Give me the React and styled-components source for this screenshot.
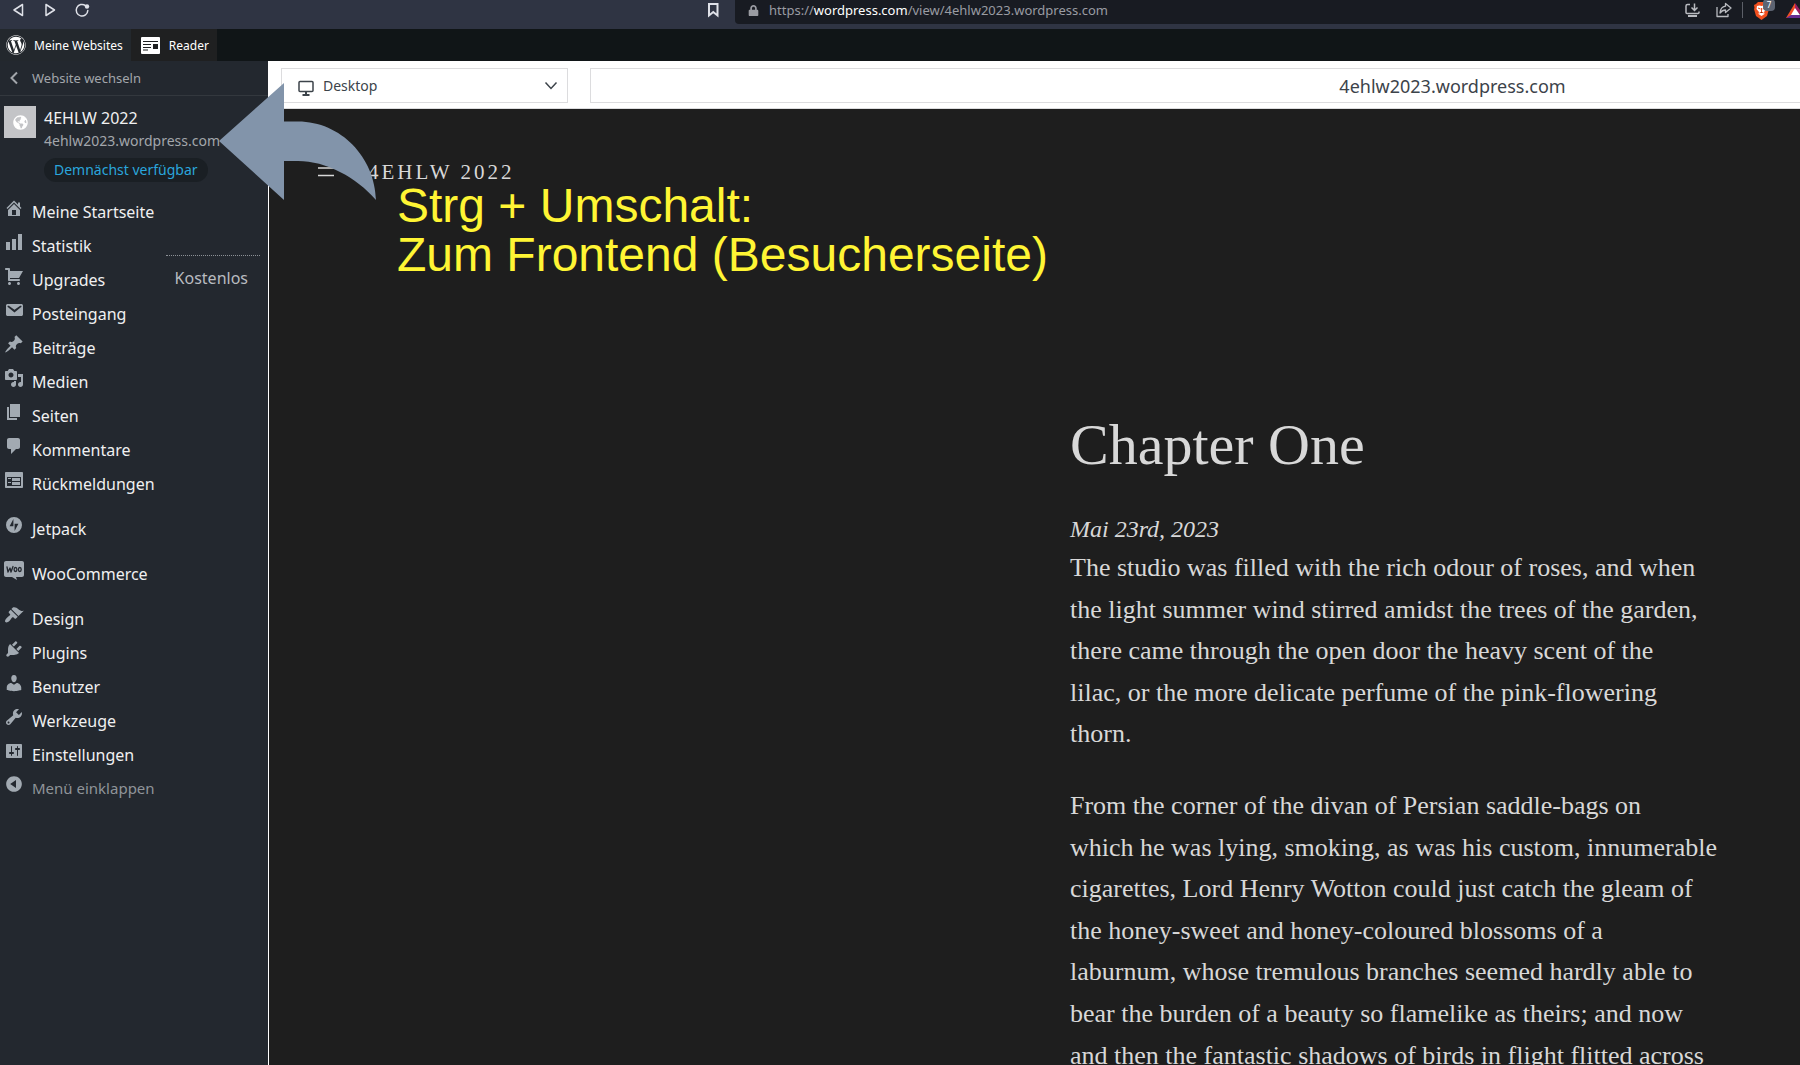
import React, { useState } from 'react';
import styled, { createGlobalStyle } from 'styled-components'
import { FaWordpress, FaGlobeAmericas, FaLock } from 'react-icons/fa'

const GlobalStyle = createGlobalStyle`
  * { box-sizing: border-box; }
  body {
    margin: 0;
    background: #1e1e1e;
    font-family: "Noto Sans", "Open Sans", sans-serif;
  }
  button, input, select {
    font-family: inherit;
    border: 0;
    padding: 0;
    margin: 0;
    background: none;
    color: inherit;
  }
  a { color: inherit; text-decoration: none; }
`

const icons = {
  home: 'M16 8.5l1.53 1.53-1.06 1.06L10 4.6l-6.47 6.49-1.06-1.06L10 2.5l4 4v-2h2v4zm-6-2.46l6 5.99V18H4v-5.97zM12 17v-5H8v5h4z',
  stats: 'M18 18V2h-4v16h4zm-6 0V7H8v11h4zm-6 0v-8H2v8h4z',
  cart: 'M6 13h9c.55 0 1 .45 1 1s-.45 1-1 1H5c-.55 0-1-.45-1-1V4H2c-.55 0-1-.45-1-1s.45-1 1-1h3c.55 0 1 .45 1 1v2h13l-4 7H6v1zm-.5 3c.83 0 1.5.67 1.5 1.5S6.33 19 5.5 19 4 18.33 4 17.5 4.67 16 5.5 16zm9 0c.83 0 1.5.67 1.5 1.5s-.67 1.5-1.5 1.5-1.5-.67-1.5-1.5.67-1.5 1.5-1.5z',
  mail: 'M3.87 4h13.25C18.37 4 19 4.59 19 5.79v8.42c0 1.19-.63 1.79-1.88 1.79H3.87c-1.25 0-1.88-.6-1.88-1.79V5.79c0-1.2.63-1.79 1.88-1.79zm6.62 8.6l6.74-5.53c.24-.2.43-.66.13-1.07-.29-.41-.82-.42-1.17-.17l-5.7 3.86L4.8 5.83c-.35-.25-.88-.24-1.17.17-.3.41-.11.87.13 1.07z',
  post: 'M10.44 3.02l1.82-1.82 6.36 6.35-1.83 1.82c-1.05-.68-2.48-.57-3.41.36l-.75.75c-.92.93-1.04 2.35-.35 3.41l-1.83 1.82-2.41-2.41-2.8 2.79c-.42.42-3.38 2.71-3.8 2.29s1.86-3.39 2.28-3.81l2.79-2.79L4.1 9.36l1.83-1.82c1.05.69 2.48.57 3.4-.36l.75-.75c.93-.92 1.05-2.35.36-3.41z',
  media: 'M13 11V4c0-.55-.45-1-1-1h-1.67L9 1H5L3.67 3H2c-.55 0-1 .45-1 1v7c0 .55.45 1 1 1h10c.55 0 1-.45 1-1zM7 4.5c1.38 0 2.5 1.12 2.5 2.5S8.38 9.5 7 9.5 4.5 8.38 4.5 7 5.62 4.5 7 4.5zM14 6h5v10.5c0 1.38-1.12 2.5-2.5 2.5S14 17.88 14 16.5s1.12-2.5 2.5-2.5c.17 0 .34.02.5.05V9h-3V6zm-4 8.05V13h2v3.5c0 1.38-1.12 2.5-2.5 2.5S7 17.88 7 16.5 8.12 14 9.5 14c.17 0 .34.02.5.05z',
  page: 'M6 15V2h10v13H6zm-1 1h8v2H3V5h2v11z',
  comment: 'M5 2h9c1.1 0 2 .9 2 2v7c0 1.1-.9 2-2 2h-2l-5 5v-5H5c-1.1 0-2-.9-2-2V4c0-1.1.9-2 2-2z',
  feedback: 'M2 2h16c.55 0 1 .45 1 1v14c0 .55-.45 1-1 1H2c-.55 0-1-.45-1-1V3c0-.55.45-1 1-1zm15 14V7H3v9h14zM4 8v1h3V8H4zm4 0v3h8V8H8zm-4 4v1h3v-1H4zm4 0v3h8v-3H8z',
  jetpack: 'M10 2a8 8 0 1 0 0 16 8 8 0 0 0 0-16zM9.4 11.2H5.6L9.4 4zM10.6 16V8.8h3.8z',
  design: 'M14.48 11.06L7.41 3.99l1.5-1.5c.5-.56 2.3-.47 3.51.32 1.21.8 1.43 1.28 2.91 2.1 1.18.64 2.45 1.26 4.45.85zm-.71.71L6.7 4.7 4.93 6.47c-.39.39-.39 1.02 0 1.41l1.06 1.06c.39.39.39 1.03 0 1.42-.6.6-1.43 1.11-2.21 1.69-.35.26-.7.53-1.01.84C1.43 14.23.4 16.08 1.4 17.07c.99 1 2.84-.03 4.18-1.36.31-.31.58-.66.85-1.02.57-.78 1.08-1.61 1.69-2.21.39-.39 1.02-.39 1.41 0l1.06 1.06c.39.39 1.02.39 1.41 0z',
  plugins: 'M13.11 4.36L9.87 7.6 8 5.73l3.24-3.24c.35-.34 1.05-.2 1.56.32.52.51.66 1.21.31 1.55zm-8 1.77l.91-1.12 9.01 9.01-1.19.84c-.71.71-2.63 1.16-3.82 1.16H6.14L4.9 17.26c-.59.59-1.54.59-2.12 0-.59-.58-.59-1.53 0-2.12l1.24-1.24v-3.88c0-1.13.4-3.19 1.09-3.89zm7.26 3.97l3.24-3.24c.34-.35 1.04-.21 1.55.31.52.51.66 1.21.31 1.55l-3.24 3.25z',
  users: 'M10 9.25c-2.27 0-2.73-3.44-2.73-3.44C7 4.02 7.82 2 9.97 2c2.16 0 2.98 2.02 2.71 3.81 0 0-.41 3.44-2.68 3.44zm0 2.57L12.72 10c2.39 0 4.52 2.33 4.52 4.53v2.49s-3.65 1.13-7.24 1.13c-3.65 0-7.24-1.13-7.24-1.13v-2.49c0-2.25 1.94-4.48 4.47-4.48z',
  tools: 'M16.68 9.77c-1.34 1.34-3.3 1.67-4.95.99l-5.41 6.52c-.99.99-2.59.99-3.58 0s-.99-2.59 0-3.57l6.52-5.42c-.68-1.65-.35-3.61.99-4.95 1.28-1.28 3.12-1.62 4.72-1.06l-2.89 2.89 2.82 2.82 2.86-2.87c.53 1.58.18 3.39-1.08 4.65zM3.81 16.21c.4.39 1.04.39 1.43 0 .4-.4.4-1.04 0-1.43-.39-.4-1.03-.4-1.43 0-.39.39-.39 1.03 0 1.43z',
  settings: 'M18 16V4c0-.55-.45-1-1-1H3c-.55 0-1 .45-1 1v12c0 .55.45 1 1 1h14c.55 0 1-.45 1-1zM8 11h1c.55 0 1 .45 1 1s-.45 1-1 1H8v1.5c0 .28-.22.5-.5.5s-.5-.22-.5-.5V13H6c-.55 0-1-.45-1-1s.45-1 1-1h1V5.5c0-.28.22-.5.5-.5s.5.22.5.5V11zm5-2h-1c-.55 0-1-.45-1-1s.45-1 1-1h1V5.5c0-.28.22-.5.5-.5s.5.22.5.5V7h1c.55 0 1 .45 1 1s-.45 1-1 1h-1v5.5c0 .28-.22.5-.5.5s-.5-.22-.5-.5V9z',
  collapse: 'M10 2.16c4.33 0 7.84 3.51 7.84 7.84s-3.51 7.84-7.84 7.84S2.16 14.33 2.16 10 5.71 2.16 10 2.16zm2 11.72V6.12L6.18 9.97z'
}

const menu = [
  [
    ['home', 'Meine Startseite'],
    ['stats', 'Statistik'],
    ['cart', 'Upgrades', 'Kostenlos'],
    ['mail', 'Posteingang'],
    ['post', 'Beiträge'],
    ['media', 'Medien'],
    ['page', 'Seiten'],
    ['comment', 'Kommentare'],
    ['feedback', 'Rückmeldungen']
  ],
  [['jetpack', 'Jetpack']],
  [['woo', 'WooCommerce']],
  [
    ['design', 'Design'],
    ['plugins', 'Plugins'],
    ['users', 'Benutzer'],
    ['tools', 'Werkzeuge'],
    ['settings', 'Einstellungen']
  ]
]

const paragraphs = [
  [
    'The studio was filled with the rich odour of roses, and when',
    'the light summer wind stirred amidst the trees of the garden,',
    'there came through the open door the heavy scent of the',
    'lilac, or the more delicate perfume of the pink-flowering',
    'thorn.'
  ],
  [
    'From the corner of the divan of Persian saddle-bags on',
    'which he was lying, smoking, as was his custom, innumerable',
    'cigarettes, Lord Henry Wotton could just catch the gleam of',
    'the honey-sweet and honey-coloured blossoms of a',
    'laburnum, whose tremulous branches seemed hardly able to',
    'bear the burden of a beauty so flamelike as theirs; and now',
    'and then the fantastic shadows of birds in flight flitted across'
  ]
]

const Screen = styled.div`
  position: relative;
  display: flex;
  flex-direction: column;
  height: 100vh;
  overflow: hidden;
`

const BrowserBar = styled.header`
  display: flex;
  align-items: flex-start;
  height: 29px;
  flex: none;
  background: #2f3443;
  color: #dfe1e8;
`

const NavButtons = styled.div`
  display: flex;
  gap: 16px;
  padding: 2px 10px;
  flex: 1;
`

const IconButton = styled.button`
  display: flex;
  width: 16px;
  height: 16px;
`

const Location = styled.div`
  display: flex;
  align-items: center;
  flex: 0 0 1065px;
  height: 24px;
  padding: 0 0 4px 13px;
  margin-left: 13px;
  background: #181b22;
  border-bottom-left-radius: 4px;
  overflow: hidden;
  color: #9a9ca2;
  font-size: 13px;
  line-height: 20px;
`

const Url = styled.div`
  flex: 1;
  padding-left: 10px;

  b {
    font-weight: 400;
    color: #fff;
  }
`

const Actions = styled.div`
  display: flex;
  align-items: center;
  gap: 16px;
`

const Divider = styled.span`
  width: 1px;
  height: 16px;
  margin: 0 -6px;
  background: #5c5f68;
`

const Shield = styled.button`
  position: relative;
  display: flex;
`

const ShieldCount = styled.span`
  position: absolute;
  top: -2px;
  left: 10px;
  width: 12px;
  height: 12px;
  border-radius: 4px;
  background: #5d6472;
  color: #fff;
  font-size: 8px;
  line-height: 12px;
  text-align: center;
`

const MasterBar = styled.nav`
  display: flex;
  height: 32px;
  flex: none;
  background: #101517;
  color: #fff;
  font-size: 12px;
`

const MasterItem = styled.a`
  display: flex;
  align-items: center;
  gap: 8px;
  padding: 0 8px 0 6px;
  background: #23282d;
`

const ReaderItem = styled(MasterItem)`
  gap: 9px;
  padding: 0 8px 0 10px;
  background: #1f2021;
`

const Body = styled.div`
  display: flex;
  flex: 1;
  min-height: 0;
`

const Sidebar = styled.aside`
  width: 268px;
  flex: none;
  background: #23282f;
  color: #f0f0f1;
`

const SwitchSite = styled.a`
  display: flex;
  align-items: center;
  gap: 10px;
  height: 35px;
  padding-left: 8px;
  border-bottom: 1px solid #33383e;
  color: #a2a6ab;
  font-size: 13px;
`

const Site = styled.div`
  display: flex;
  align-items: flex-start;
  gap: 8px;
  padding: 10px 4px 13px;
`

const SiteIcon = styled.div`
  display: flex;
  align-items: center;
  justify-content: center;
  width: 32px;
  height: 32px;
  background: #c3c4c7;
  color: #fff;
`

const SiteName = styled.div`
  font-size: 16px;
  line-height: 24px;
`

const SiteUrl = styled.div`
  color: #a2a6ab;
  font-size: 14px;
  line-height: 22px;
`

const SiteBadge = styled.div`
  width: fit-content;
  margin-top: 6px;
  padding: 0 10px;
  border-radius: 12px;
  background: #1a1f24;
  color: #2aa6dc;
  font-size: 14px;
  line-height: 24px;
`

const MenuGroup = styled.ul`
  list-style: none;
  margin: 0 0 11px;
  padding: 0;
`

const MenuItem = styled.a`
  position: relative;
  display: flex;
  align-items: flex-start;
  gap: 8px;
  height: 34px;
  padding: 3px 4px;
  font-size: 16px;
  line-height: 28px;

  svg {
    flex: none;
    fill: #a2aab2;
  }
`

const Collapse = styled(MenuItem)`
  margin-top: -12px;
  width: 100%;
  color: #8f9499;
  font-size: 15px;
  text-align: left;
`

const Plan = styled.span`
  position: absolute;
  top: -8px;
  right: 8px;
  padding: 0 12px 0 9px;
  border-top: 1px dotted #8c9196;
  color: #b9bcc0;
  line-height: 44px;
`

const Preview = styled.main`
  flex: 1;
  min-width: 0;
  border-left: 1px solid #fff;
  overflow: hidden;
`

const Toolbar = styled.div`
  display: flex;
  gap: 22px;
  height: 48px;
  padding: 7px 0 6px 12px;
  background: #fff;
  color: #3c434a;
  border-bottom: 1px solid #dcdcde;
`

const DeviceField = styled.label`
  position: relative;
  width: 287px;
  flex: none;

  svg {
    position: absolute;
    pointer-events: none;
  }
  svg:first-child { left: 17px; top: 12px; }
  svg:last-child { right: 10px; top: 13px; }
`

const DeviceSelect = styled.select`
  appearance: none;
  width: 100%;
  height: 35px;
  padding-left: 41px;
  border: 1px solid #dcdcde;
  font-size: 14px;
`

const Address = styled.input`
  flex: 1;
  min-width: 0;
  height: 35px;
  padding-left: 514px;
  border: 1px solid #dcdcde;
  border-right: 0;
  font-size: 18px;
  text-align: center;
`

const BlogHeader = styled.div`
  display: flex;
  align-items: center;
  gap: 34px;
  padding: 50px 49px 0;
  color: #d8d8d8;
  font-family: "Liberation Serif", serif;
  font-size: 21px;
  line-height: 26px;
  letter-spacing: 3px;
`

const Article = styled.article`
  width: 648px;
  margin: 220px 82px 0 auto;
  color: #d8d8d8;
  font-family: "Liberation Serif", serif;
  font-size: 26px;
  line-height: 1.6;
  white-space: nowrap;

  h1 {
    margin: 0 0 26px;
    font-size: 58px;
    font-weight: 400;
    line-height: 80px;
  }
  p { margin: 0 0 30px; }
`

const DateLine = styled.div`
  font-size: 24px;
  font-style: italic;
  line-height: 36px;
`

// the hint and its arrow float over sidebar and preview
const Arrow = styled.svg`
  position: absolute;
  left: 219px;
  top: 83px;
`

const Hint = styled.div`
  position: absolute;
  left: 397px;
  top: 181px;
  color: #fff534;
  font-family: "Liberation Sans", Arial, sans-serif;
  font-size: 48px;
  line-height: 49px;
`

const MenuIcon = ({ name }) => name === 'woo' ? (
  <svg width="20" height="20" viewBox="0 0 20 20">
    <path d="M2 1h16c1.1 0 2 .9 2 2v12c0 1.1-.9 2-2 2h-6l1 3-5-3H2c-1.1 0-2-.9-2-2V3c0-1.1.9-2 2-2z" />
    <g fill="none" stroke="#23282f" strokeWidth="1.3" strokeLinecap="round" strokeLinejoin="round">
      <path d="M3 7l1 5 2-4 1 4 2-5.5" />
      <ellipse cx="11.5" cy="9.5" rx="1.4" ry="2" />
      <ellipse cx="15.8" cy="9.5" rx="1.4" ry="2" />
    </g>
  </svg>
) : (
  <svg width="20" height="20" viewBox="0 0 20 20">
    <path fillRule={name === 'jetpack' ? 'evenodd' : 'nonzero'} d={icons[name]} />
  </svg>
)

const App = () => {
  const [device, setDevice] = useState('Desktop')

  return (
    <Screen>
      <GlobalStyle />
      <BrowserBar>
        <NavButtons>
          <IconButton aria-label="Zurück">
            <svg width="16" height="16" fill="none" stroke="currentColor" strokeWidth="1.5" strokeLinejoin="round"><path d="M12.5 2.5v11L4 8z" /></svg>
          </IconButton>
          <IconButton aria-label="Vorwärts">
            <svg width="16" height="16" fill="none" stroke="currentColor" strokeWidth="1.5" strokeLinejoin="round"><path d="M4 2.5v11L12.5 8z" /></svg>
          </IconButton>
          <IconButton aria-label="Neu laden">
            <svg width="16" height="16" fill="none" stroke="currentColor" strokeWidth="1.5" strokeLinecap="round"><path d="M11.5 3.6A5.8 5.8 0 1 0 13.8 8.5" /><circle cx="13" cy="4.5" r="2.2" fill="currentColor" stroke="none" /></svg>
          </IconButton>
        </NavButtons>
        <IconButton aria-label="Lesezeichen">
          <svg width="14" height="20" fill="none" stroke="currentColor" strokeWidth="2"><path d="M3 4h8.5v11.5L7.25 12 3 15.5z" /></svg>
        </IconButton>
        <Location>
          <FaLock size={11} />
          <Url>https://<b>wordpress.com</b>/view/4ehlw2023.wordpress.com</Url>
          <Actions>
            <IconButton aria-label="App installieren">
              <svg width="16" height="16" fill="none" stroke="#b9bbc0" strokeWidth="1.5"><path d="M6 2.5H3.5q-1.5 0-1.5 1.5v6.5q0 1 1 1h11q1 0 1-1V9.5M10.5 1.5v6.5M7.5 5.5l3 3 3-3" /><path d="M4 14h9" strokeWidth="2" /></svg>
            </IconButton>
            <IconButton aria-label="Teilen">
              <svg width="16" height="16" fill="none" stroke="#b9bbc0" strokeWidth="1.3" strokeLinejoin="round"><path d="M1 5v9.5h11V12M9.5 1.5l5.5 4.500-5.5 4.5V8C7 8 5.5 9 4 11c.3-3.5 2-6.300 5.5-6.800z" /></svg>
            </IconButton>
            <Divider />
            <Shield aria-label="Brave Shields">
              <svg width="17" height="19" viewBox="0 0 17 19">
                <path d="M5 1h7l2 2 2 1-.5 3 .5 1-2 7-5.5 4L3 15 1 8l.5-1L1 4l2-1z" fill="#f1501f" />
                <path d="M4 5l2.5-.5 2 .5 2-.5L13 5l.5 3-2.5 3 .5 2-3 2-3-2 .5-2-2.5-3z" fill="#fff" />
                <path d="M5 7l2.5 1M12 7L9.5 8M8.5 7v4M6.5 12l2-1 2 1" stroke="#f1501f" />
              </svg>
              <ShieldCount>7</ShieldCount>
            </Shield>
            <svg width="14" height="16" viewBox="0 0 14 16">
              <path d="M9 1L0 16h5l4-7z" fill="#f04e23" />
              <path d="M9 1v8l5 3V8z" fill="#9e1f63" />
              <path d="M0 16l5-3h9v3z" fill="#662d91" />
              <path d="M9 6l-4 7h9z" fill="#fff" />
            </svg>
          </Actions>
        </Location>
      </BrowserBar>

      <MasterBar>
        <MasterItem href="#"><FaWordpress size={20} />Meine Websites</MasterItem>
        <ReaderItem href="#">
          <svg width="19" height="17" viewBox="0 0 19 17">
            <rect width="19" height="17" rx="1" fill="#fff" />
            <path d="M2 4.5h15M2 7.5h8M2 10.500h8M2 13h5" stroke="#1f2021" strokeWidth="1.2" />
            <path d="M12 7h5v5h-5z" fill="#1f2021" />
          </svg>
          Reader
        </ReaderItem>
      </MasterBar>

      <Body>
        <Sidebar>
          <SwitchSite href="#">
            <svg width="14" height="14" fill="none" stroke="currentColor" strokeWidth="2"><path d="M9 1.5L3.5 7 9 12.5" /></svg>
            Website wechseln
          </SwitchSite>
          <Site>
            <SiteIcon><FaGlobeAmericas size={15} /></SiteIcon>
            <div>
              <SiteName>4EHLW 2022</SiteName>
              <SiteUrl>4ehlw2023.wordpress.com</SiteUrl>
              <SiteBadge>Demnächst verfügbar</SiteBadge>
            </div>
          </Site>
          {menu.map((group, i) => (
            <MenuGroup key={i}>
              {group.map(([icon, label, plan]) => (
                <li key={label}>
                  <MenuItem href="#">
                    <MenuIcon name={icon} />
                    {label}
                    {plan && <Plan>{plan}</Plan>}
                  </MenuItem>
                </li>
              ))}
            </MenuGroup>
          ))}
          <Collapse as="button"><MenuIcon name="collapse" />Menü einklappen</Collapse>
        </Sidebar>

        <Preview>
          <Toolbar>
            <DeviceField>
              <svg width="16" height="17" fill="none" stroke="currentColor" strokeWidth="1.5"><rect x="1" y="1.5" width="14" height="10" rx="1" /><path d="M8 12v3M4.5 15h7" strokeWidth="2" /></svg>
              <DeviceSelect aria-label="Gerät" value={device} onChange={e => setDevice(e.target.value)}>
                <option>Desktop</option>
                <option>Tablet</option>
                <option>Smartphone</option>
              </DeviceSelect>
              <svg width="14" height="10" fill="none" stroke="currentColor" strokeWidth="1.5"><path d="M1.5 1.5L7 7.5l5.5-6" /></svg>
            </DeviceField>
            <Address aria-label="Adresse" defaultValue="4ehlw2023.wordpress.com" />
          </Toolbar>
          <BlogHeader>
            <svg width="16" height="10" stroke="currentColor" strokeWidth="1.5"><path d="M0 1h16M0 8.5h16" /></svg>
            4EHLW 2022
          </BlogHeader>
          <Article>
            <h1>Chapter One</h1>
            <DateLine>Mai 23rd, 2023</DateLine>
            {paragraphs.map((lines, i) => (
              <p key={i}>
                {lines.map(line => <React.Fragment key={line}>{line}<br /></React.Fragment>)}
              </p>
            ))}
          </Article>
        </Preview>
      </Body>

      <Arrow width="158" height="118" fill="#8294aa">
        <path d="M0 58L65 0v38.5h14c43 0 77 36 78 78.5C137 94 107 78 79 78H65v39z" />
      </Arrow>
      <Hint>Strg + Umschalt:<br />Zum Frontend (Besucherseite)</Hint>
    </Screen>
  );
}

export default App;
